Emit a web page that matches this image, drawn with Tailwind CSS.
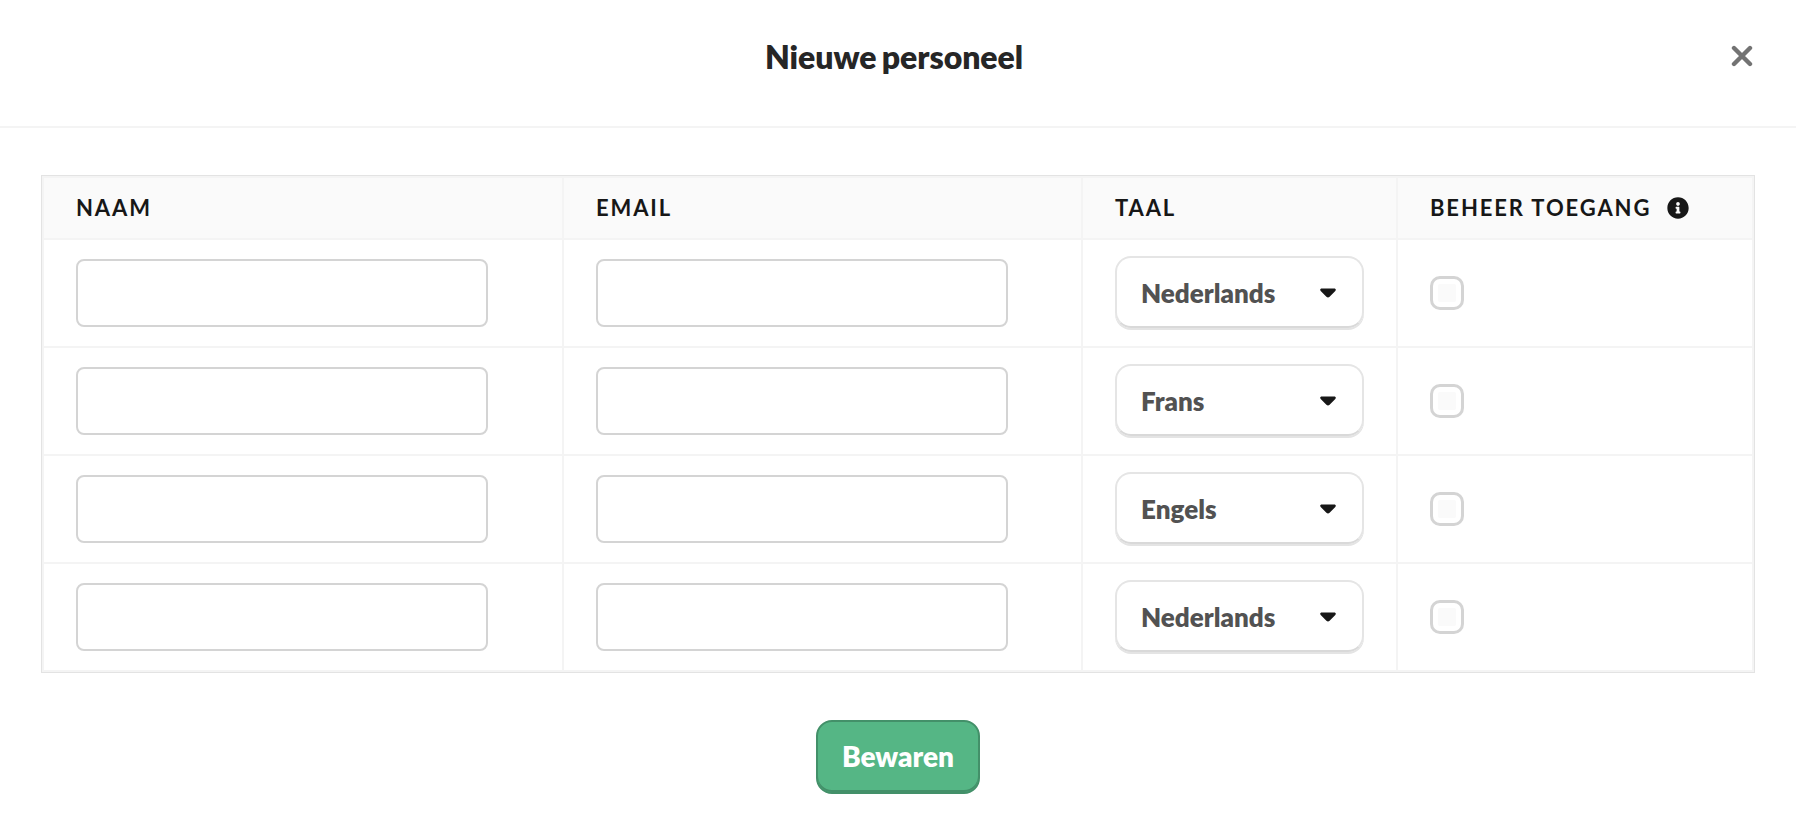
<!DOCTYPE html>
<html lang="nl">
<head>
    <meta charset="UTF-8">
    <meta name="viewport" content="width=device-width, initial-scale=1.0">
    <title>Nieuwe personeel</title>
    <script src="https://cdn.jsdelivr.net/npm/@tailwindcss/browser@4"></script>
</head>
<body class="bg-white min-h-screen font-['Lato',sans-serif]">
    <header class="grid grid-cols-[1fr_auto_1fr] h-32 pl-[35px] pr-[43px] pb-3.5 items-center border-b-2 border-[#f4f4f4]">
        <h1 class="col-start-2 pt-0.5 text-[32px] leading-10 font-extrabold tracking-[-0.06px] [word-spacing:-2px] text-[#262626]">Nieuwe personeel</h1>
        <button type="button" aria-label="Sluiten" class="justify-self-end">
            <svg class="w-[22px] h-[22px]" viewBox="0 0 22 22" fill="none" stroke="#737373" stroke-width="4.4" stroke-linecap="round">
                <path d="M3 3L19 19M19 3L3 19"/>
            </svg>
        </button>
    </header>

    <form class="pt-[47px] flex flex-col items-center">
        <div class="w-[1714px] border border-[#e3e3e3]">
            <table class="w-full table-fixed border-separate border-spacing-0 border-2 border-b-0 border-[#f4f4f4]">
                <colgroup>
                    <col class="w-[520px]">
                    <col class="w-[519px]">
                    <col class="w-[315px]">
                    <col class="w-[354px]">
                </colgroup>
                <thead>
                    <tr class="h-[62px] bg-[#fafafa] text-left text-[22px] leading-7 tracking-[1.88px] text-[#171717]">
                        <th class="px-8 border-r-2 border-b-2 border-[#f4f4f4] font-bold">NAAM</th>
                        <th class="px-8 border-r-2 border-b-2 border-[#f4f4f4] font-bold">EMAIL</th>
                        <th class="px-8 border-r-2 border-b-2 border-[#f4f4f4] font-bold">TAAL</th>
                        <th class="px-8 border-b-2 border-[#f4f4f4] font-bold">
                            <div class="flex items-center gap-4">
                                BEHEER TOEGANG
                                <svg class="w-[22px] h-[22px]" viewBox="0 0 512 512" fill="#171717">
                                    <path d="M256 8C119.043 8 8 119.083 8 256c0 136.997 111.043 248 248 248s248-111.003 248-248C504 119.083 392.957 8 256 8zm0 110c23.196 0 42 18.804 42 42s-18.804 42-42 42-42-18.804-42-42 18.804-42 42-42zm56 254c0 6.627-5.373 12-12 12h-88c-6.627 0-12-5.373-12-12v-24c0-6.627 5.373-12 12-12h12v-64h-12c-6.627 0-12-5.373-12-12v-24c0-6.627 5.373-12 12-12h64c6.627 0 12 5.373 12 12v100h12c6.627 0 12 5.373 12 12v24z"/>
                                </svg>
                            </div>
                        </th>
                    </tr>
                </thead>
                <tbody id="rows"></tbody>
            </table>
        </div>

        <button type="submit" class="mt-[47px] w-[164px] h-[74px] pb-0.5 rounded-2xl border-2 border-[#439069] bg-[#55b685] shadow-[inset_0_-2px_0_#439069] text-[28px] leading-8 font-extrabold text-white">Bewaren</button>
    </form>

    <template id="row">
        <tr class="h-[108px]">
            <td class="px-8 border-r-2 border-b-2 border-[#f4f4f4]">
                <input type="text" class="block w-[412px] h-[68px] px-4 text-2xl border-2 border-[#d4d4d4] rounded-lg">
            </td>
            <td class="px-8 border-r-2 border-b-2 border-[#f4f4f4]">
                <input type="email" class="block w-[412px] h-[68px] px-4 text-2xl border-2 border-[#d4d4d4] rounded-lg">
            </td>
            <td class="px-8 border-r-2 border-b-2 border-[#f4f4f4]">
                <button type="button" class="flex items-center justify-between w-[249px] h-[72px] -mt-0.5 pt-0.5 pl-6 pr-[26px] rounded-2xl border-2 border-[#e5e5e5] border-b-[#d9d9d9] shadow-[0_2px_0_#e4e4e4] text-[26px] leading-8 font-extrabold text-[#525252]">
                    <span class="language"></span>
                    <svg class="w-4 h-2.5" viewBox="0 0 16 10" fill="#171717">
                        <path d="M1.8 .5H14.2C15.8 .5 16.3 2 15.3 3L9.6 8.7C8.6 9.7 7.4 9.7 6.4 8.7L.7 3C-.3 2 .2 .5 1.8 .5Z"/>
                    </svg>
                </button>
            </td>
            <td class="px-8 border-b-2 border-[#f4f4f4]">
                <label class="flex items-center justify-center w-[34px] h-[34px] border-3 border-[#d4d4d4] rounded-[10px]">
                    <input type="checkbox" class="appearance-none w-[18px] h-[18px] rounded-xs bg-[#fafafa] checked:bg-[#55b685]">
                </label>
            </td>
        </tr>
    </template>

    <script>
        const languages = ["Nederlands", "Frans", "Engels", "Nederlands"];
        const template = document.getElementById("row");

        languages.forEach(language => {
            const row = template.content.cloneNode(true);
            row.querySelector(".language").textContent = language;
            document.getElementById("rows").appendChild(row);
        });
    </script>
</body>
</html>
